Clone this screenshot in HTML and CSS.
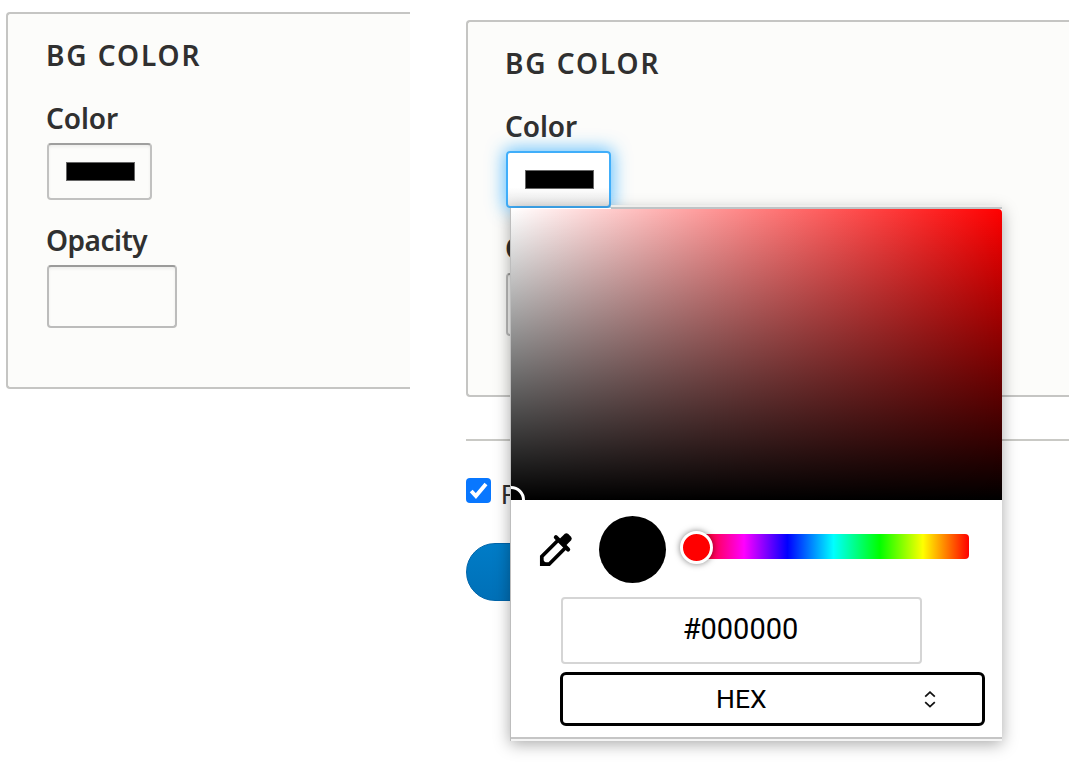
FILE: index.html
```html
<!DOCTYPE html>
<html lang="en">
<head>
<meta charset="utf-8">
<title>Background color</title>
<link rel="stylesheet" href="styles.css">
</head>
<body>
<main class="page">
  <section class="column column-left">
    <div class="panel">
      <h2 class="title">BG COLOR</h2>
      <span class="label label-color">Color</span>
      <div class="color-field"><span class="swatch"></span></div>
      <span class="label label-opacity">Opacity</span>
      <div class="opacity-field"></div>
    </div>
  </section>
  <section class="column column-right">
    <div class="panel">
      <h2 class="title">BG COLOR</h2>
      <span class="label label-color">Color</span>
      <div class="color-field focused"><span class="swatch"></span></div>
      <span class="label label-opacity">Opacity</span>
      <div class="opacity-field"></div>
    </div>
    <div class="rule"></div>
    <div class="check-row">
      <span class="checkbox"><svg width="25" height="25" viewBox="0 0 25 25"><path d="M5.2 13 L9.9 18 L20 6" fill="none" stroke="#fff" stroke-width="3.9"/></svg></span>
      <span class="check-text">P</span>
    </div>
    <div class="button"></div>

    <div class="picker">
      <div class="picker-edge"></div>
      <div class="spectrum"><span class="spectrum-handle"></span></div>
      <div class="tools">
        <svg class="dropper" width="32" height="33" viewBox="0 0 32 33">
          <path d="M17.6 7.7 L1.8 23.5 V31.2 H9.1 L25 15.3" fill="none" stroke="#000" stroke-width="3.7"/>
          <path d="M1 25 L8 32 H1 Z" fill="#000"/>
          <path d="M15.9 4.2 L28.1 16.4" stroke="#000" stroke-width="4.2" stroke-linecap="round"/>
          <path d="M17.5 8 L24.8 .8 Q26.6-.4 28.3 1.1 L31 3.8 Q32.5 5.5 31.2 7.2 L24 14.5 Z" fill="#000"/>
        </svg>
        <span class="preview"></span>
        <div class="hue"><span class="hue-handle"></span></div>
      </div>
      <div class="hex-field">#000000</div>
      <div class="format"><span>HEX</span>
        <svg class="arrows" width="12" height="17" viewBox="0 0 12 17"><path d="M1.2 5.6 L6 1.2 L10.8 5.6 M1.2 11.2 L6 15.6 L10.8 11.2" fill="none" stroke="#111" stroke-width="1.8"/></svg>
      </div>
      <div class="picker-bottom"></div>
    </div>
  </section>
</main>
</body>
</html>
```

FILE: styles.css
```css
* { box-sizing: border-box; }
body { margin: 0; background: #fff; color: #303030; font-family: "Noto Sans", sans-serif; }
.page { display: flex; width: 1069px; height: 775px; overflow: hidden; }
.column-left { width: 410px; padding: 12px 0 0 6px; }
.column-right { position: relative; width: 659px; padding: 20px 0 0 56px; }
.panel {
  display: flex; flex-direction: column; align-items: flex-start;
  height: 377px; padding: 25px 0 0 39px;
  border: 2px solid #c5c5c3; border-right: 0; border-radius: 4px 0 0 4px;
  background: #fcfcfa;
}
.title { margin: 0 0 0 -1px; font-size: 28px; line-height: 32px; font-weight: 600; letter-spacing: 1.9px; white-space: nowrap; }
.label { margin-left: -1px; font-size: 28px; line-height: 32px; font-weight: 600; letter-spacing: -.5px; }
.label-color { margin-top: 31px; letter-spacing: -.1px; }
.color-field {
  display: flex; width: 105px; height: 57px; margin-top: 9px; padding: 17px 16px 17px 17px;
  border: 2px solid #c1c1c0; border-top-color: #9f9f9e; border-radius: 4px;
  box-shadow: inset 0 2px 3px rgba(0,0,0,.06);
}
.swatch { flex: none; width: 69px; height: 19px; border: 1px solid #666; background: #000; }
.column-right .title, .column-right .label { margin-left: -2px; }
.focused {
  margin-left: -1px;
  border-color: #40aefa;
  background: linear-gradient(#fff 65%, #e7e7e7);
  box-shadow: 0 0 17px 2px rgba(40,169,255,.72);
}
.label-opacity { margin-top: 24px; }
.opacity-field {
  width: 130px; height: 63px; margin-top: 9px;
  border: 2px solid #bcbcbb; border-top-color: #9b9b9a; border-radius: 4px;
  box-shadow: inset 0 2px 3px rgba(0,0,0,.06);
}
.column-right .opacity-field { margin-left: -1px; }
.rule { height: 2px; margin-top: 42px; background: #c9c9c5; }
.check-row { display: flex; align-items: center; height: 26px; margin-top: 36px; }
.checkbox { width: 25px; height: 25px; border-radius: 4px; background: #0877ff; }
.checkbox svg { display: block; }
.check-text { margin: 10px 0 0 10px; font: 27px/28px "Liberation Sans", sans-serif; }
.button {
  width: 90px; height: 58px; margin-top: 40px; border: 1px solid #0065aa;
  border-radius: 29px 0 0 29px; background: linear-gradient(#007cc7, #0070b7);
}
.picker {
  position: absolute; left: 100px; top: 208px; width: 492px; height: 533px;
  display: flex; flex-direction: column; padding-top: 1px;
  border-left: 1px solid #bdbdbd; background: #fff;
  box-shadow: 0 3px 15px rgba(0,0,0,.34);
}
/* light strip above the popup, right of the focused field */
.picker-edge { position: absolute; left: 100px; right: 0; top: -3px; height: 4px; background: linear-gradient(#eeeeec 60%, #bfc3c5 60%); }
.spectrum {
  position: relative; height: 291px; overflow: hidden; border-radius: 0 4px 0 0;
  background: linear-gradient(to top, #000, transparent), linear-gradient(to right, #fff, #f00);
}
.spectrum-handle { position: absolute; left: -14px; bottom: -14px; width: 28px; height: 28px; border: 3px solid #fff; border-radius: 50%; background: #000; }
.tools { display: flex; align-items: flex-start; height: 97px; padding: 15px 0 0 29px; }
.dropper { margin-top: 18px; overflow: visible; }
.preview { width: 67px; height: 67px; margin: 1px 0 0 27px; border-radius: 50%; background: #000; }
.hue {
  position: relative; width: 271px; height: 25px; margin: 19px 0 0 32px; border-radius: 4px;
  background: linear-gradient(to right, #f00, #f0f 17%, #00f 33%, #0ff 50%, #0f0 67%, #ff0 83%, #f00);
}
.hue-handle { position: absolute; left: -18px; top: -3px; width: 33px; height: 33px; border: 3px solid #fff; border-radius: 50%; background: #f00; box-shadow: 0 0 6px rgba(0,0,0,.5); }
.hex-field {
  width: 361px; height: 67px; margin-left: 50px; padding-right: 2px; border: 2px solid #d5d5d5; border-radius: 4px;
  color: #000; font: 29px/60px Roboto, sans-serif; text-align: center;
}
.format {
  display: flex; align-items: center; justify-content: space-between;
  width: 425px; height: 54px; margin: 8px 0 0 49px; padding: 0 46px 0 153px;
  border: 3px solid #000; border-radius: 6px; color: #000; font: 26.5px/32px Roboto, sans-serif;
}
.picker-bottom { height: 4px; margin-top: auto; border-top: 2px solid #c5c5c5; background: #f5f5f5; }
```
